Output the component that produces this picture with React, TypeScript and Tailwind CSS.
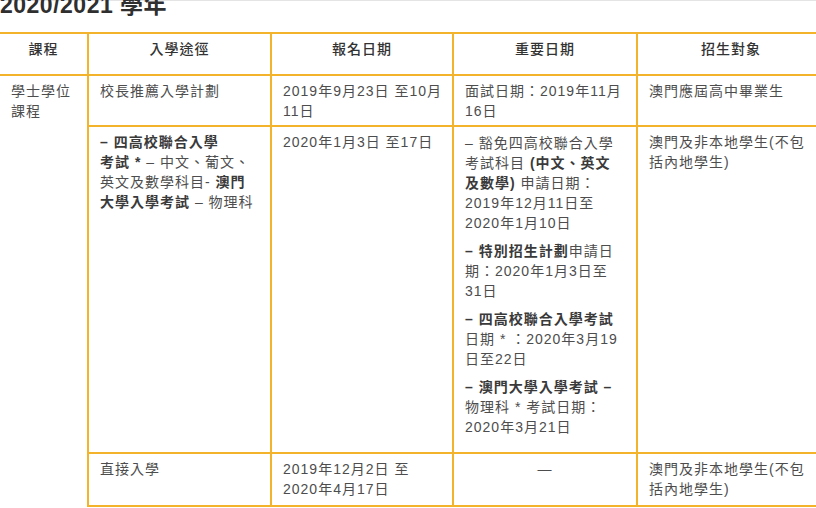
import React from 'react';

const font = '"Liberation Sans", Arial, "Noto Sans CJK TC", sans-serif';

const th = 'border-2 border-[#f3b42c] pt-[5px] pb-[15px] px-[11px] text-center font-medium text-[#333] leading-[20px]';
const td = 'border-2 border-[#f3b42c] align-top px-[11px] pt-[5px] pb-[4px] leading-[20px] whitespace-nowrap';

const B: React.FC<{ children: React.ReactNode }> = ({ children }) => (
  <span className="font-semibold text-[#3a3a3a]">{children}</span>
);

export default function App() {
  return (
    <div
      className="w-[816px] h-[508px] overflow-hidden bg-white text-[14px] tracking-[1px] text-[#4d4d4d]"
      style={{ fontFamily: font }}
    >
      <div className="h-px bg-[#e4e4e4]" />
      <h2 className="relative -mt-[7px] text-[23px] leading-none font-bold tracking-[0.5px] text-[#2f2f2f]">
        2020/2021 學年
      </h2>
      <table className="mt-[15px] -ml-[2px] w-[826px] table-fixed border-collapse">
        <colgroup>
          <col className="w-[89px]" />
          <col className="w-[183px]" />
          <col className="w-[182px]" />
          <col className="w-[184px]" />
          <col className="w-[188px]" />
        </colgroup>
        <thead>
          <tr>
            <th className={th}>課程</th>
            <th className={th}>入學途徑</th>
            <th className={th}>報名日期</th>
            <th className={th}>重要日期</th>
            <th className={th}>招生對象</th>
          </tr>
        </thead>
        <tbody>
          <tr>
            <td rowSpan={3} className={`${td} border-b-0`}>
              學士學位
              <br />
              課程
            </td>
            <td className={`${td} h-[50px]`}>校長推薦入學計劃</td>
            <td className={td}>
              2019年9月23日 至10月
              <br />
              11日
            </td>
            <td className={td}>
              面試日期：2019年11月
              <br />
              16日
            </td>
            <td className={td}>澳門應屆高中畢業生</td>
          </tr>
          <tr>
            <td className={td}>
              <B>– 四高校聯合入學</B>
              <br />
              <B>考試 * </B> – 中文、葡文、
              <br />
              英文及數學科目- <B>澳門</B>
              <br />
              <B>大學入學考試</B> – 物理科
            </td>
            <td className={td}>2020年1月3日 至17日</td>
            <td className={`${td} pt-[6px] pb-[7px]`}>
              <p className="mb-[8px]">
                – 豁免四高校聯合入學
                <br />
                考試科目 <B>(中文、英文</B>
                <br />
                <B>及數學)</B> 申請日期：
                <br />
                2019年12月11日至
                <br />
                2020年1月10日
              </p>
              <p className="mb-[8px]">
                <B>– 特別招生計劃</B>申請日
                <br />
                期：2020年1月3日至
                <br />
                31日
              </p>
              <p className="mb-[8px]">
                <B>– 四高校聯合入學考試</B>
                <br />
                日期 * ：2020年3月19
                <br />
                日至22日
              </p>
              <p className="mb-[8px]">
                <B>– 澳門大學入學考試 –</B>
                <br />
                物理科 * 考試日期：
                <br />
                2020年3月21日
              </p>
            </td>
            <td className={td}>
              澳門及非本地學生(不包
              <br />
              括內地學生)
            </td>
          </tr>
          <tr>
            <td className={`${td} pb-[6px]`}>直接入學</td>
            <td className={`${td} pb-[6px]`}>
              2019年12月2日 至
              <br />
              2020年4月17日
            </td>
            <td className={`${td} pb-[6px] text-center`}>—</td>
            <td className={`${td} pb-[6px]`}>
              澳門及非本地學生(不包
              <br />
              括內地學生)
            </td>
          </tr>
        </tbody>
      </table>
    </div>
  );
}
